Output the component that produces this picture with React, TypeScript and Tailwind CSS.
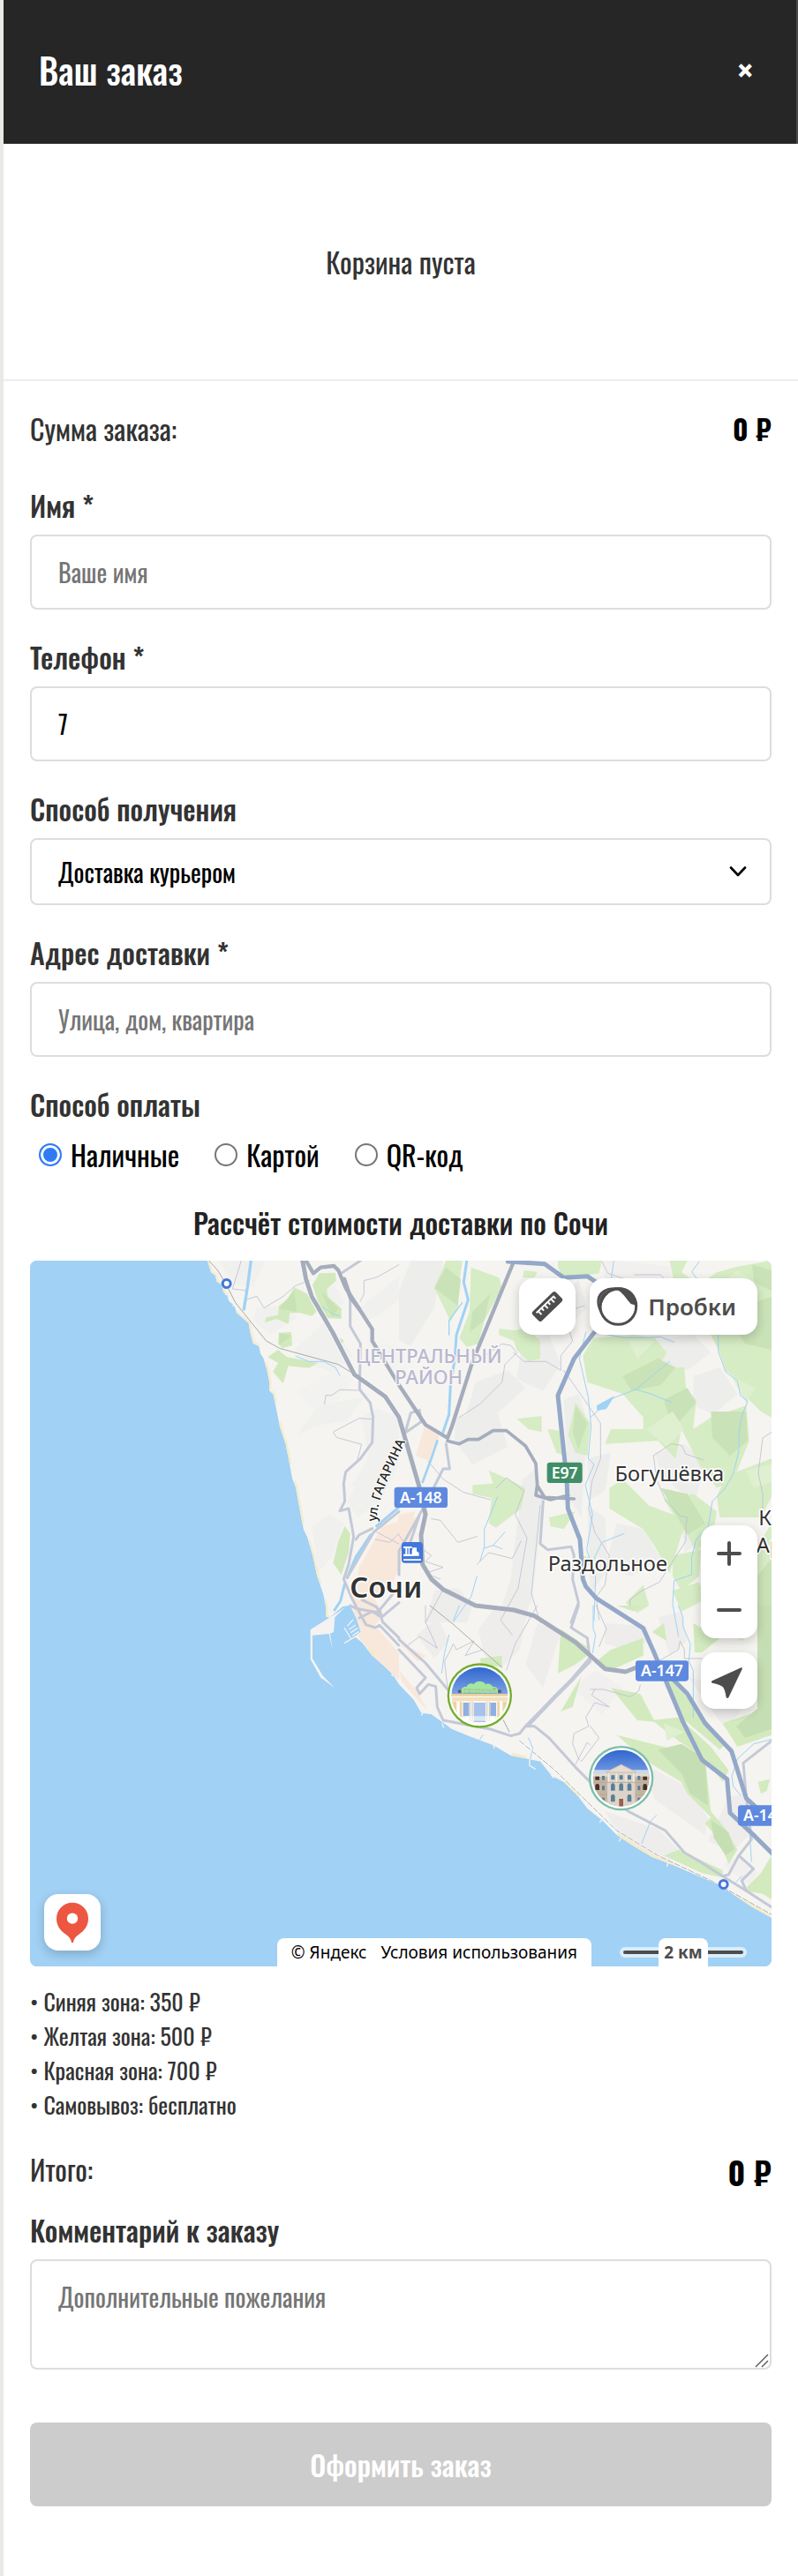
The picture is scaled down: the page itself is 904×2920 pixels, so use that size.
import type { ReactNode } from "react";

const payments = ["Наличные", "Картой", "QR-код"];
const zones = ["Синяя зона: 350 ₽", "Желтая зона: 500 ₽", "Красная зона: 700 ₽", "Самовывоз: бесплатно"];

const labelClass = "mb-[10px] block text-[32px] leading-[47px] font-medium text-[#333]";
const inputClass =
  "block w-full rounded-lg border-2 border-[#ddd] bg-white px-[30px] py-5 text-[28px] leading-[41px] text-black outline-none placeholder:text-[#757575]";

function Field({ id, label, children }: { id: string; label: string; children: ReactNode }) {
  return (
    <div className="mb-[30px]">
      <label htmlFor={id} className={labelClass}>
        {label}
      </label>
      {children}
    </div>
  );
}

function Badge({ x, y, w, text, fill }: { x: number; y: number; w: number; text: string; fill: string }) {
  return (
    <g>
      <rect x={x} y={y} width={w} height="70" rx="10" fill={fill} />
      <text x={x + w / 2} y={y + 54} textAnchor="middle" fontSize="53" fontWeight="600" fill="#fff">
        {text}
      </text>
    </g>
  );
}

function Terrain() {
  return (
    <>
      <g fill="#f0f0ee">
        <path d="M740 27h160l-40 90-60-10zM870 190l80-10 60 40-90 60-60-50zM1000 330l110-100 90 120-60 60-120-40zM1010 620l70-100 160-30-60 80-110 20zM1225 560l60-30 71 30v90l-90 110-80 40 70-100zM1180 850l70-150 106-50v60l-60 130-80 60zM1060 930l60-40 50 30-40 110-50 60zM1220 190l136-110v80l-80 60-40 10zM1100 130l40-20 30 60-30 20z" />
        <path d="M1240 300l116 20v90l-60-30zM1010 470l130-70 60 30-50 70-90 30z" fill="#f2f2f0" />
      </g>
      <g transform="translate(1356 0)" fill="#ededeb">
        <path d="M40 27h110l-30 160-80 130-40-20V130zM260 440l110-40 60 60-100 90-110 30zM190 560l140-30 40 130-120 60-60-80zM420 300l90-20 40 100-60 90-90-40zM560 500l50-20 30 90-20 330-40-60zM420 770l50-40 20 130-40 330-60 69h-60l50-150zM640 700l80-20-20 130-50 30zM850 300l150-20 60 60-80 60-100-20zM1000 420l90-30 60 90-80 70-70-30zM870 680l100-30 70 60-30 120-60-20-60-60zM740 920l90 20 60 100-100 60-90-30zM640 860l60 40 10 180-60 80zM640 190l-80 70-10-100 60-70z" />
        <path d="M690 27h60l170 20 10 60-130 10-100-10z" fill="#f1f0ef" />
        <path d="M120 1150l80-10 50 60-20 58H90zM960 920l60-30 50 60-100 70z" />
      </g>
      <g transform="translate(1356 1200)" fill="#eeedec">
        <path d="M270 80l60-80h110l-30 150-60 60-60-40zM60 100l70-60 40 80-50 60zM470 60l80 30-60 190-60-80zM700 60l140 10 20 50-90 30-70-20zM880 40l80-20 20 100-60 50zM850 550l120 60 80 110-10 60-170-120-20-60zM700 700l180 60 90 90-60 20-150-70zM980 240l60 20 120 100-50 60zM1120 650l60-10 10 140-60 60-80-40z" />
        <path d="M590 280l80-60 90 60-70 90zM1100 880l60-30 60 60-30 40z" fill="#f1f0ee" />
      </g>
      <g fill="#d1e9bc">
        <path d="M1000 118l45 22 30 60-15 15-40-10h-35l-5 37-40-17-40 13 5-18 40-8 3-32 27-20zM1085 70l55-2 2 27-32 30 5 25 45 40v35l-50-3-25-42-23-70zM948 272l42-2 3 45-33 10-15-15zM910 355l35-25 30 25 105 20-30 17-70-7-18 60-34-40 17-30zM1172 930l18 25-5 65-25 75-28-40 18-75zM1155 290l14 8-8 12z" />
        <path d="M1000 130l-52 60 60 10zM948 272l42 10-40 30zM1090 130l60 60-20 30z" fill="#c8e2b4" />
      </g>
      <g transform="translate(1356 0)" fill="#d6ecc4">
        <path d="M160 27h55l-10 73-5 90-25 45-15-35-40-80zM245 50l95 35 10 35-60 110-20 80-40 10-25-30 35-90zM540 27h150l-10 43-120 20-20-40zM425 60l45 5-10 20h-40zM340 258l60 7 30-15 50 50v60l-40 10-40-40-10-30-50-20z" />
        <path d="M920 27h60l-20 40 60 40 60-40 70-20 116-20v533l-36-20-40-40-30-60-50-40-20-60-30-60-130-30 40-80-30-40zM660 290l140-10 70 10 40 50-30 50 90 0 5 70 35 40-10 100 60-40 120-40 10 120-40 100-30 40-40 20-60-80-60-120-20 100-60-60-180 10 20-50 110 0v-40l-70-80-120-40-15-90z" />
        <path d="M600 510l50 70-10 110-40-10-25-60zM400 565l85-10v55l-45-10zM505 600l40 5 20 85-30-10zM305 740l55 25 70 35-15 70-85 65-25-15 10-85-65-15v-30l70-5zM715 800l45-30 90 90 135 50-25 50-40 130-50-90-40-60-115-70zM510 900l90-20-40 60-45-10zM1110 760l156-60v130l-36 70h-140l-10-70zM770 1190l60-60 20 70-40 25zM930 1030l96-20-6 90-60 50-30-50zM620 1030l50 10-20 30zM900 840l100-20 80 60-10 60-60 80-30-60z" />
        <path d="M1218 1000l48-80v340h-48zM930 1150l90-30 20 60-80 40z" />
        <path d="M160 50l50 40-10 90-80-60zM250 200l60-60-20 90-50 40zM760 420l120-60 60 30-50 60-100 20zM1060 540l120 0 5 100-60 50-60-60zM900 500l80-40 30 50-80 90zM1110 200l156-50v180l-90-20zM1200 40l66 20v70l-60-30zM600 520l40 60-30 90-20-60zM890 800l90 20 60 100-60 40zM1218 1100l48-60v220h-48z" fill="#cae2b7" />
        <path d="M1150 60l60 40-60 60-60-50zM780 300l90 0-60 60zM840 600l90-60 40 60-60 60zM1130 420l80 40-30 50zM1180 740l86-20v60l-60 20z" fill="#dff0d1" />
      </g>
      <g transform="translate(1356 1200)" fill="#d2eabe">
        <path d="M1218 0h48v440l-116 40-50-80 118-40zM1000 60l90 50-60 50h-25zM720 150l110-40v60l-110 50-50-30zM550 80l90 60v30l-40 30-60 30zM720 280l100 20 50 95-60-5zM620 240l-30 105-40 15zM275 180l75-10v40l-70-10zM860 390l90-10 110 100 60 80-20 40-60-80-90-60zM740 440l120 30 80 20 100 30 20 180 50 60 40 70-30 50-30-80-50-60 20-20-80-80-20-40-100-60-50-40zM950 830l150 70v25l-70-15-130-60zM740 0l80 0-20 20zM1170 970l60-60 36-60v150l-30-20zM1220 600l40-10-10 40-20 10zM900 230l60 60 150 180-20 20-130-110zM860 90l40-30 10 60z" />
        <path d="M1218 0h48v420l-90 30-30-40 72-60zM880 490l80-20 80 50 10 160-60-40-30-70zM1060 730l60 40 20 60-30 20-40-60z" fill="#c6deb3" />
        <path d="M1130 30l60 10-20 80-50-20zM900 400l70 30-60 30z" fill="#dff0d1" />
      </g>
      <g fill="#f8e8db">
        <path d="M1300 930l110-30-20 100-60 130-80 60-40-60 10-60zM1195 1140l60 10 50 80-50 60-50-50zM1205 1240l70 30 81 90v95l-90-85-55-75z" />
        <path d="M1443 590l50 30-30 90-50-20zM1356 890l55-10-30 90-45 10zM1356 1420l60 70 40 70-90-100zM1360 1330l90 40-30 20z" />
      </g>
    </>
  );
}

function Roads() {
  return (
    <g fill="none" strokeLinejoin="round" strokeLinecap="round">
      <g stroke="#bcc1d2" strokeWidth="2.5">
        <path d="M820 27l-30 96 50 6M835 160l38-12 24 40 66-40 40-35 50-20M1225 165l12-25 0-45 45-12 74-42M1103 515l4-30 20 0 28-19 60 2M1268 566l-48-3-88 47 12 18 85 24-14 50M1280 950l76 40M1275 975l50 10 31-30" />
        <g transform="translate(1356 0)">
          <path d="M205 560l70-45 75-75 10-60 40-40-20-25-30-5-65 45M390 340l35 30 75 0 50 30 0-50 40-50-10-30M600 190l30-10M690 30l20 40 60 20M560 400l70 100 55 80 0 120-30 80-10 90 20 80 50 80-15 100-30 40 10 78M100 710l50 60 70 45 90 25M330 800l35-35 60 45-30 80 40 80-30 170-60 110 40 50M110 905l30 5 60 75 65-20M265 1060l40-40 80 20 30-60M1266 610l-30 20-15 120 15 70 0 90M865 690l60-40 35 5 15 30 60 20M865 690l10 80 30 70 50 55 25 5-5 30 0 50-90 140-60 30-40 30v20M800 75h40l50 0 15 20M70 1000l40 30-20 20 60 20-60 20 50 20M0 960l40 60M150 1145l-60 113M480 860l-30 300 30 98" />
        </g>
        <g transform="translate(1356 1200)">
          <path d="M30 135l40-30 60 40-40-90 0-55M470 0l-75 130-30 90M165 280l-10-90 30-60 10 20 60-30-30 50 60-20M650 285l45 0 90 25 30-20 5-20M665 285l-10 20 60 40-50-15-30 50 10 30-50 25-5 35 20 50 30-55 10 10M600 540l10-20 10 10 60-80-30-40M670 0l35 80-25 60M880 190l70-40 5-30 15 30 0 30 60 0" />
        </g>
      </g>
      <g stroke="#9fd2f5" strokeWidth="3">
        <path d="M853 27l-12 90-12 75" strokeWidth="10" />
        <path d="M1005 352l45 18 50 0 40 20 15 28M1095 183l35 25 25 7" strokeWidth="3" />
        <path d="M1180 1105l30-70 50-75" strokeWidth="10" />
        <path d="M1280 930l76-65M1172 1125l-15 60-20 30" strokeWidth="9" />
        <g transform="translate(1356 0)">
          <path d="M230 30l-10 70 15 60-40 120-5 80-15 90-5 100-20 60" strokeWidth="9" />
          <path d="M215 170l-45 60v50" strokeWidth="4" />
          <path d="M130 640l-20 60-30 80" strokeWidth="8" />
          <path d="M335 830l-45 110 0 60-15 50M290 1005l30-10 40-45M320 995l30 12M265 1100l-20 70-60 85" />
          <path d="M635 270l-22 90 30 130 10 100-10 110 20 20-30 70 25 100-20 120 30 90-5 150M650 560l75-65 80-30 115-95M805 465l50 15 70 28M660 1045l30-60 75-30M730 27l-10 70M1020 30l-25 35 60 80 30 100 0 90 25 70 40 30 10 50 25 20-20 50-10 60 0 60-20 80-30 50-40 40-15 90-40 40-15 60 0 60-60 20-5 80 20 110" />
          <path d="M690 275l80 15 120-3 45 17" />
        </g>
        <path d="M2030 520l55-30-25 40-28 5z" fill="#9fd2f5" />
        <g transform="translate(1356 1200)">
          <path d="M170 100l-15 60-10 70M205 0l-20 50M440 450l15 35-10 40M875 713l-20 20-30 75M285 440l-10 15M660 0l0 80 8 20-10 60M950 0l15 40 0 30 25 60-5 60 15 30 0 160M1266 455l-60 15-55 50-20 60 5 35 25 30M1190 750l8 120M1165 920l-20 20" />
        </g>
      </g>
      <g stroke="#fff" strokeWidth="20" opacity=".65">
        <path d="M1028 27l12 63 20 60 70 120 75 145 105 75 46 70" />
      </g>
      <g stroke="#c4c9d7" strokeWidth="9">
        <path d="M1190 140v110l35 60-3 155 36 45 10 50-3 85-40 55-50 45-7 40 4 60-17 33 30-8 17 95-17 95-17 50 30 70 46 85 31 10 15-8 65 68M1356 880l-86 70-90 155M1210 975l10-15 45-22M1225 27l-65 43M1190 1200l20 10 80 15-10-20-50-25M1356 1190l-60 50-30-20-45 22M1356 1310l-56-55-10-40 66-80" />
        <g transform="translate(1356 0)">
          <path d="M20 615l20-70 30-10 5 40-50 35M160 650l12 85-22 0-55 110-50 90-45 80v80M70 890l-50 150M490 845l-10 145 25 20 80-10 10 30-5 80 20 80-25 68" />
        </g>
        <g transform="translate(1356 1200)">
          <path d="M610 0l-25 75 55 35 10 80-120 120-100 100M430 410l30 0 50 40 90 100 60 60 120 90 125 65 65 75 60 35 70 45 80 50 86 55M430 410l-20 25-30 8-70-23-160-30-20-45-5-70-25-7-30 32-10-20 30-35L0 150M0 115l90 80 75 90M1266 460l-96 75 10 115 18 145-43 55-35 65-20 5M1155 850l50 45-40 40 15 35" />
          <path d="M650 180l-60 70-60 60-90 95" strokeWidth="14" />
        </g>
      </g>
      <g stroke="#a5adbd">
        <path d="M1028 27l12 63 20 60 70 120 75 145 105 75 46 70 35 120 35 120 20 90-15 70 5 100 30 50 40 35 110 55 130 15 70 20 140 90 100 90 70 10 50-20 30-10" strokeWidth="15" />
        <path d="M1040 27l25 43 25-20 45-5 15 15 25 60 90 140v40l91 150 90 135 75 45 15-40 70-220 140-340-25-20" strokeWidth="13" />
        <path d="M1521 640l40 10 30-15h35l50-30h45l65 52 35 60 5 75 25 40 100 5M1826 790l-5 35 50 15 60-15" strokeWidth="11" />
        <path d="M1170 90l20 60 30 40" strokeWidth="14" />
      </g>
      <g transform="translate(1356 0)" stroke="#94a8c9" strokeWidth="15">
        <path d="M370 30l125 8 65 47 80-5 60 40M680 250l-85 110-55 125 30 285 4 100 41 105 10 135 10 25 35 40 160 102 35 78 50 120 50 120 65 130 85 65 10 115 85 80 101 100M880 1400l100 100 60 100 90 95 50 160 86 80" />
      </g>
      <g stroke="#a9a9a9" strokeWidth="3">
        <path d="M710 27l30 33 30 50 30 60 105 130 45 25 200 55 40 25" />
        <g transform="translate(1356 1200)">
          <path d="M105 0l75 60 170 150M355 390l20 40" />
          <path d="M410 460l120 100 210 205 140 85 180 85 206 115" stroke="#fff" strokeWidth="6" />
          <path d="M410 460l120 100 210 205 140 85 180 85 206 115" strokeDasharray="20 6" />
        </g>
      </g>
    </g>
  );
}

function Arboretum() {
  return (
    <g transform="translate(1630 1506)">
      <circle r="110" fill="#72ad2d" />
      <circle r="103" fill="#fff" />
      <clipPath id="arboretum-clip">
        <circle r="96" />
      </clipPath>
      <linearGradient id="poi-sky" x1="0" y1="0" x2="0" y2="1">
        <stop offset="0" stopColor="#2f66cf" />
        <stop offset="1" stopColor="#86a9e6" />
      </linearGradient>
      <g clipPath="url(#arboretum-clip)">
        <rect x="-96" y="-96" width="192" height="100" fill="url(#poi-sky)" />
        <rect x="-96" y="-6" width="192" height="102" fill="#fbf7ee" />
        <rect x="-96" y="-6" width="192" height="8" fill="#e9cf9f" />
        <rect x="-96" y="6" width="192" height="12" fill="#f3dfb9" />
        <path d="M-96 20h36v58h-36zM60 20h36v58H60z" fill="#ecd3a4" />
        <path d="M-78 20h10v62h-10zM68 20h10v62H68z" fill="#fff" />
        <rect x="-56" y="24" width="20" height="46" fill="#8fb0df" />
        <rect x="36" y="24" width="20" height="46" fill="#8fb0df" />
        <rect x="-20" y="24" width="40" height="66" fill="#a7c2ea" />
        <path d="M-33 20v66M-25 20v66M25 20v66M33 20v66" stroke="#c9c6c0" strokeWidth="3" />
        <path d="M-50 70h100v16H-50z" fill="#fff" opacity=".6" />
        <path d="M-62-8c-4-18 8-24 18-22 4-12 18-14 24-8 6-14 34-14 40 0 8-6 20-2 24 8 12-2 22 6 18 22z" fill="#a6e6a0" />
        <text y="-9" textAnchor="middle" fontSize="18" fontWeight="700" fill="#f3fff0" stroke="#5fae5c" strokeWidth="1">
          ДЕНДРАРИЙ
        </text>
        <circle cx="-68" cy="-14" r="6" fill="#55606e" />
        <circle cx="68" cy="-14" r="6" fill="#55606e" />
      </g>
    </g>
  );
}

function Palace() {
  return (
    <g transform="translate(2111 1787)">
      <circle r="110" fill="#7bbeab" />
      <circle r="103" fill="#fff" />
      <clipPath id="palace-clip">
        <circle r="96" />
      </clipPath>
      <g clipPath="url(#palace-clip)">
        <rect x="-96" y="-96" width="192" height="100" fill="url(#poi-sky)" />
        <path d="M-96-28H96v30H-96z" fill="#cbd9e6" />
        <rect x="-96" y="-12" width="192" height="108" fill="#c3b4a2" />
        <path d="M-96-14h50v8h-50zM46-14h50v8H46z" fill="#e6dccf" />
        <path d="M-47-22h94V96h-94z" fill="#ddd4c9" />
        <path d="M-52-20L0-46l52 26z" fill="#e5ddd2" stroke="#c9bfb3" strokeWidth="3" />
        <path d="M-47 14h94M-96 14h49M47 14h49M-96 56h49M47 56h49" stroke="#b8a997" strokeWidth="3" />
        <g fill="#587f99">
          <path d="M-34-10h12v15h-12zM-6-10H6V5H-6zM22-10h12V5H22z" />
          <path d="M-35 42V24a7 7 0 0 1 14 0v18zM-7 42V24a7 7 0 0 1 14 0v18zM21 42V24a7 7 0 0 1 14 0v18zM-35 80V62a7 7 0 0 1 14 0v18zM21 80V62a7 7 0 0 1 14 0v18z" />
          <path d="M-65-8h9V6h-9zM56-8h9V6h-9zM-65 26h9v15h-9zM56 26h9v15h-9zM-65 66h9v15h-9zM56 66h9v15h-9z" />
        </g>
        <path d="M-88-6h14V6h-14zM74-6h14V6H74zM-88 40V26a7 7 0 0 1 14 0v14zM74 40V26a7 7 0 0 1 14 0v14z" fill="#46302a" />
        <path d="M-7 70H7v26H-7z" fill="#94604f" />
        <path d="M-42-16V12M-16-16V12M16-16V12M42-16V12" stroke="#f3ede5" strokeWidth="4" />
      </g>
    </g>
  );
}

/* Western shore, from the top edge of the map down to the harbour. */
const coast =
  "M705 27l12 40 15 10 5 22 15 8 8 28 12 10 6 20 18 14 8 25 41 36 5 30 10 38 20 10 5 25 10 15 12 40 8 40 0 30 14 14 12 60 10 50 20 60 12 60 10 55 12 30 17 95 10 50 12 25 18 60 15 70 22 65 8 40v35l12 5";

function CityMap() {
  return (
    <svg
      viewBox="102 27 2520 2400"
      preserveAspectRatio="xMidYMid slice"
      className="absolute inset-0 size-full font-['Noto_Sans','Open_Sans',sans-serif]"
      role="img"
      aria-label="Карта Сочи"
    >
      <rect x="102" y="27" width="2520" height="2400" fill="#a1d1f5" />
      <clipPath id="land">
        <path
          d={`${coast}L1165 1203L1190 1200L1212 1245L1226 1290L1205 1305L1230 1325L1265 1370L1310 1410L1335 1435L1356 1468L1406 1520L1432 1565L1466 1570L1536 1620L1596 1645L1676 1675L1736 1710L1786 1720L1836 1730L1876 1780L1916 1800L1966 1850L1996 1890L2046 1930L2096 1980L2156 2020L2216 2055L2306 2090L2386 2125L2446 2150L2496 2185L2556 2225L2622 2262V27Z`}
        />
      </clipPath>
      <path d="M1150 1222L1055 1282v100l35 63 48 35-40-40-36-60V1301l56-5 12 54-8-55 12-5 4-50 36-36z" fill="#f4f3f2" />
      <g clipPath="url(#land)">
        <rect x="102" y="27" width="2520" height="2400" fill="#f5f4f0" />
        <Terrain />
        <path d={coast} fill="none" stroke="#f3eccf" strokeWidth="14" strokeDasharray="150 60" />
        <path d="M1740 1709l46 12M1916 1800l50 50M2096 1980l60 40 60 35 90 35M2496 2185l60 40 66 40M1250 1345l20 25" fill="none" stroke="#f5eac8" strokeWidth="18" />
        <Roads />
      </g>
      <path
        d="M765 142h12M790 180h10M815 212h10M735 88h12M918 468h14M978 635h12M1008 763h12M1012 790h10M1042 903h12M1048 933h12M1055 965h12M1060 1012h22M1438 1562l-6 12M1502 1600l6 16M1676 1672l4 14M1800 1722l0 22 20 12M1872 1775l10 12M1990 1880l10-4M2046 1928l-8 10M2110 1990l-6 12M1336 1440l-6-6M1170 1328l40-24M1170 1275l22 36M1180 1270l20-22M1186 1282l22-16M1192 1292l24-16M1198 1302l22-14M2270 2076l-4 12"
        fill="none"
        stroke="#f4f3f2"
        strokeWidth="4"
      />
      {[
        [770, 105],
        [2459, 2148],
      ].map(([cx, cy]) => (
        <circle key={cx} cx={cx} cy={cy} r="13.5" fill="#fff" stroke="#4377db" strokeWidth="9" />
      ))}
      <g textAnchor="middle" fontSize="66" fontWeight="500" fill="#b9b7cf" stroke="#f8f7f6" strokeWidth="8" paintOrder="stroke">
        <text x="1457" y="376">ЦЕНТРАЛЬНЫЙ</text>
        <text x="1457" y="446">РАЙОН</text>
      </g>
      <g fontSize="71" fill="#333" stroke="#fff" strokeWidth="10" paintOrder="stroke" strokeLinejoin="round">
        <text x="2275" y="776" textAnchor="middle">Богушёвка</text>
        <text x="2065" y="1082" textAnchor="middle">Раздольное</text>
        <text x="2578" y="926">К</text>
        <text x="2570" y="1020">Ар</text>
        <text x="1312" y="1172" fontSize="98" fontWeight="600" textAnchor="middle">Сочи</text>
        <path id="gagarina" d="M1280 914C1282 860 1300 810 1330 745S1370 660 1392 610" fill="none" stroke="none" />
        <text fontSize="44" fontWeight="500" strokeWidth="6" fill="#222">
          <textPath href="#gagarina">ул. ГАГАРИНА</textPath>
        </text>
      </g>
      <Badge x={1340} y={797} w={181} text="А-148" fill="#5e89df" />
      <Badge x={1859} y={713} w={120} text="E97" fill="#408e68" />
      <Badge x={2160} y={1387} w={180} text="А-147" fill="#5e89df" />
      <Badge x={2508} y={1879} w={180} text="А-147" fill="#5e89df" />
      <rect x="1365" y="984" width="72" height="71" rx="11" fill="#4377db" />
      <path
        d="M1371 999h29v6h-8v20h8v7h-29v-7h7v-20h-7zM1384 1005v20h4v-20zM1402 1003h14v12l8 6v10h-24v-16zM1371 1042h60v5h-60z"
        fill="#fff"
        fillRule="evenodd"
      />
      <Arboretum />
      <Palace />
    </svg>
  );
}

const mapButton =
  "flex size-16 items-center justify-center rounded-2xl bg-white text-[#4d4d4d] shadow-[0_4px_12px_rgba(0,0,0,0.2)]";

function DeliveryMap() {
  return (
    <div className="relative h-[800px] overflow-hidden rounded-lg bg-[#a1d1f5] font-['Noto_Sans','Open_Sans',sans-serif]">
      <CityMap />
      <div className="absolute top-5 right-4 flex gap-4">
        <button type="button" aria-label="Линейка" className={mapButton}>
          <svg viewBox="-96 -96 192 192" className="size-16">
            <g transform="rotate(-44)">
              <rect x="-55" y="-22" width="110" height="44" rx="8" fill="currentColor" />
              <path d="M-42-10H42M-33-10V6M-18-10V2M-3-10V6M12-10V2M27-10V6M39-10V0" stroke="#fff" strokeWidth="6" fill="none" />
            </g>
          </svg>
        </button>
        <button
          type="button"
          className="flex h-16 items-center gap-[10px] rounded-2xl bg-white pr-6 pl-2 text-[26px] leading-none font-semibold text-[#4d4d4d] shadow-[0_4px_12px_rgba(0,0,0,0.2)]"
        >
          <svg viewBox="288 50 144 144" className="size-12">
            <circle cx="361" cy="122" r="61" fill="none" stroke="currentColor" strokeWidth="9" />
            <path
              d="M302 146C286 122 284 92 300 75C318 55 345 56 372 57C400 60 424 82 427 120L404 113C388 96 376 74 362 68C335 64 300 92 302 146Z"
              fill="currentColor"
            />
            <path d="M296 112C296 92 308 76 328 66" fill="none" stroke="#8a8a8a" strokeWidth="1.5" />
          </svg>
          Пробки
        </button>
      </div>
      <div className="absolute top-[300px] right-4 flex flex-col gap-4">
        <div className="flex flex-col rounded-2xl bg-white text-[#4d4d4d] shadow-[0_4px_12px_rgba(0,0,0,0.2)]">
          <button type="button" aria-label="Приблизить" className="flex size-16 items-center justify-center">
            <svg viewBox="0 0 32 32" className="size-8" stroke="currentColor" strokeWidth="4" strokeLinecap="round">
              <path d="M4 16h24M16 4v24" />
            </svg>
          </button>
          <button type="button" aria-label="Отдалить" className="flex size-16 items-center justify-center">
            <svg viewBox="0 0 32 32" className="size-8" stroke="currentColor" strokeWidth="4" strokeLinecap="round">
              <path d="M4 16h24" />
            </svg>
          </button>
        </div>
        <button type="button" aria-label="Моё местоположение" className={mapButton}>
          <svg viewBox="1026 159 192 192" className="size-16">
            <path d="M1163 211Q1168 210 1166 216L1120 313Q1115 318 1112 312Q1108 286 1102 278Q1094 269 1064 263Q1059 260 1064 256Z" fill="currentColor" />
          </svg>
        </button>
      </div>
      <button type="button" aria-label="Открыть карту" className={`absolute bottom-[18px] left-4 ${mapButton}`}>
        <svg viewBox="150 981 192 192" className="size-16">
          <path
            d="M246 1010a54 54 0 0 1 54 54c0 26-14 41-30 53-13 10-20 17-21 29h-6c-1-12-8-19-21-29-16-12-30-27-30-53a54 54 0 0 1 54-54z"
            fill="#ed5640"
          />
          <circle cx="246" cy="1064" r="18.5" fill="#fff" />
        </svg>
      </button>
      <div className="absolute right-7 bottom-0 flex items-end gap-8">
        <div className="flex h-8 items-center gap-4 rounded-t-lg bg-white px-4 text-[19px] leading-8 whitespace-nowrap text-black">
          <a href="#yandex">© Яндекс</a>
          <a href="#terms">Условия использования</a>
        </div>
        <div className="relative flex h-8 w-36 items-center justify-center">
          <div className="absolute inset-x-0 top-[10px] h-3 rounded-full bg-white/60 p-1">
            <div className="h-1 rounded-full bg-[#4d4d4d]" />
          </div>
          <div className="relative h-8 w-14 rounded-t-lg bg-white text-center text-[19px] leading-8 font-bold whitespace-nowrap text-[#4d4d4d]">
            2 км
          </div>
        </div>
      </div>
    </div>
  );
}

export default function App() {
  return (
    <main className="min-h-screen border-l-4 border-[#ebe9e5] bg-white font-['Oswald','Roboto_Condensed',sans-serif] text-[32px] leading-[47px] text-[#333]">
      <header className="flex items-center justify-between border-r-2 border-[#4a4a4a] bg-[#262626] pt-[50px] pr-11 pb-[54px] pl-10 text-white">
        <h1 className="text-[40px] leading-[59px] font-medium">Ваш заказ</h1>
        <button type="button" aria-label="Закрыть" className="px-1 text-[40px] leading-[59px] font-bold">
          ×
        </button>
      </header>

      <p className="border-b-2 border-[#eee] py-[110px] text-center">Корзина пуста</p>

      <form className="px-[30px] pt-[30px] pb-20">
        <div className="mb-10 flex justify-between">
          <span>Сумма заказа:</span>
          <b className="font-bold text-black">0 ₽</b>
        </div>

        <Field id="name" label="Имя *">
          <input id="name" type="text" placeholder="Ваше имя" className={inputClass} />
        </Field>
        <Field id="phone" label="Телефон *">
          <input id="phone" type="tel" defaultValue="7" className={inputClass} />
        </Field>
        <Field id="method" label="Способ получения">
          <div className="relative">
            <select
              id="method"
              className="block h-[76px] w-full appearance-none rounded-lg border-2 border-[#ddd] bg-white px-[30px] text-[28px] leading-[41px] text-black outline-none"
            >
              <option>Доставка курьером</option>
              <option>Самовывоз</option>
            </select>
            <svg
              viewBox="0 0 20 12"
              className="pointer-events-none absolute top-8 right-7 h-3 w-5"
              fill="none"
              stroke="#000"
              strokeWidth="2.6"
              strokeLinecap="round"
              strokeLinejoin="round"
            >
              <path d="M2 1.5l8 8.5 8-8.5" />
            </svg>
          </div>
        </Field>
        <Field id="address" label="Адрес доставки *">
          <input id="address" type="text" placeholder="Улица, дом, квартира" className={inputClass} />
        </Field>

        <fieldset>
          <legend className={labelClass}>Способ оплаты</legend>
          <div className="flex flex-wrap gap-[30px] text-black">
            {payments.map((p, i) => (
              <label key={p} className="flex items-center gap-[10px] pl-[10px]">
                <input
                  type="radio"
                  name="payment"
                  defaultChecked={i === 0}
                  className="size-[26px] appearance-none rounded-full border-2 border-[#767676] bg-white checked:border-[#2f7bf6] checked:bg-[#2f7bf6] checked:shadow-[inset_0_0_0_3px_white]"
                />
                {p}
              </label>
            ))}
          </div>
        </fieldset>

        <h2 className="mt-[30px] mb-5 text-center font-medium text-[#222]">Рассчёт стоимости доставки по Сочи</h2>
        <DeliveryMap />

        <ul className="mt-5 text-[26px] leading-[39px]">
          {zones.map((z) => (
            <li key={z}>• {z}</li>
          ))}
        </ul>

        <div className="mt-[30px] mb-4 flex items-start justify-between">
          <span>Итого:</span>
          <b className="text-[36px] leading-[53px] font-bold text-black">0 ₽</b>
        </div>

        <label htmlFor="comment" className={labelClass}>
          Комментарий к заказу
        </label>
        <div className="relative">
          <textarea id="comment" placeholder="Дополнительные пожелания" className={`${inputClass} h-[125px] resize-none`} />
          <svg
            viewBox="0 0 16 16"
            className="pointer-events-none absolute right-[3px] bottom-[2px] size-4"
            fill="none"
            stroke="#555"
            strokeWidth="1.4"
          >
            <path d="M1 15L15 1M8 15l7-7" />
          </svg>
        </div>

        <button type="submit" disabled className="mt-[60px] h-[95px] w-full rounded-lg bg-[#ccc] font-medium text-white">
          Оформить заказ
        </button>
      </form>
    </main>
  );
}
